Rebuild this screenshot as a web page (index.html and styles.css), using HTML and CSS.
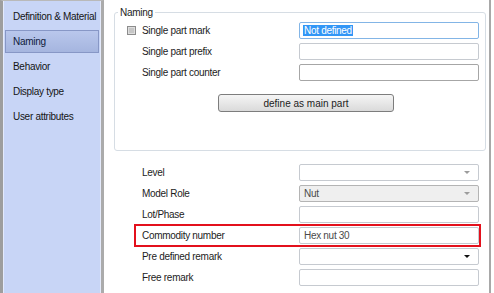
FILE: index.html
```html
<!DOCTYPE html>
<html lang="en">

<head>
  <meta charset="UTF-8">
  <meta name="viewport" content="width=device-width, initial-scale=1.0">
  <title>Part properties</title>
  <link rel="stylesheet" href="styles.css">
</head>

<body>
  <div class="dialog">
    <nav class="tabs">
      <a class="tab">Definition &amp; Material</a>
      <a class="tab active">Naming</a>
      <a class="tab">Behavior</a>
      <a class="tab">Display type</a>
      <a class="tab">User attributes</a>
    </nav>
    <main class="panel">
      <fieldset class="group">
        <legend>Naming</legend>
        <div class="rows">
          <div class="row">
            <span class="check"></span>
            <label>Single part mark</label>
            <div class="field focus"><span class="selected">Not defined</span></div>
          </div>
          <div class="row">
            <span></span>
            <label>Single part prefix</label>
            <div class="field"></div>
          </div>
          <div class="row">
            <span></span>
            <label>Single part counter</label>
            <div class="field dark"></div>
          </div>
        </div>
        <button class="btn">define as main part</button>
      </fieldset>
      <section class="props">
        <div class="prop">
          <label>Level</label>
          <div class="field"><span class="arrow"></span></div>
        </div>
        <div class="prop">
          <label>Model Role</label>
          <div class="field readonly"><span class="value">Nut</span><span class="arrow"></span></div>
        </div>
        <div class="prop">
          <label>Lot/Phase</label>
          <div class="field"></div>
        </div>
        <div class="prop highlight">
          <label>Commodity number</label>
          <div class="field"><span class="value">Hex nut 30</span></div>
        </div>
        <div class="prop">
          <label>Pre defined remark</label>
          <div class="field"><span class="arrow black"></span></div>
        </div>
        <div class="prop">
          <label>Free remark</label>
          <div class="field"></div>
        </div>
      </section>
    </main>
  </div>
</body>

</html>
```

FILE: styles.css
```css
html {
  box-sizing: border-box;
  font-family: "Liberation Sans", Arial, sans-serif;
  font-size: 10px;
  letter-spacing: -0.3px;
}

*,
*:after,
*:before {
  box-sizing: inherit;
}

body {
  margin: 0;
  background-color: #fff;
  color: #1c1c1c;
}

.dialog {
  display: flex;
  height: 293px;
  padding-right: 3px;
}

/* left tab list */
.tabs {
  flex: none;
  width: 104px;
  display: flex;
  flex-direction: column;
  gap: 2px;
  padding: 4px 2px 0;
  background-color: #c8d5f6;
  border-left: 3px solid #9e9e9e;
  border-right: 3px solid #ababab;
  border-top: 1px solid #b9b9b9;
  box-shadow: inset 1px 0 0 #e4eafb, inset -1px 0 0 #e4eafb;
}

.tab {
  display: flex;
  align-items: center;
  height: 23px;
  padding-left: 7px;
  border: 1px solid transparent;
  white-space: nowrap;
  color: #141414;
}

.tab.active {
  background: linear-gradient(#b9c7ec, #a5b5df);
  border-color: #8797c6;
  color: #0f1a3a;
}

/* right panel */
.panel {
  flex: 1;
  padding: 6px 3px 0 10px;
  border-right: 2px solid #a8a8a8;
}

.group {
  margin: 0;
  min-width: 0;
  padding: 2px 6px 38px 12px;
  border: 1px solid #d6dde4;
  border-radius: 3px;
}

.group legend {
  margin-left: -9px;
  padding: 0 2px;
  line-height: 13px;
}

.rows {
  display: flex;
  flex-direction: column;
  gap: 2px;
}

.row {
  display: grid;
  grid-template-columns: 15px 157px 180px;
  align-items: center;
  height: 19px;
}

.check {
  width: 9px;
  height: 9px;
  border: 1px solid #8c8c8c;
  background-color: #c6c6c6;
  box-shadow: inset 0 0 0 1px #dedede;
}

.field {
  display: flex;
  align-items: center;
  height: 17px;
  padding: 0 3px;
  border: 1px solid #c6cad0;
  border-radius: 2px;
  background-color: #fff;
  color: #4a4a4a;
}

.field.focus {
  border-color: #83b5e6;
}

.field.dark {
  border-color: #a6a6a6;
}

.field.readonly {
  background-color: #efefef;
  border-color: #b4b4b4;
}

.selected {
  padding: 0 1px;
  background-color: #3296f6;
  color: #fff;
}

.value {
  padding-left: 1px;
}

.arrow {
  margin-left: auto;
  margin-right: 5px;
  border-left: 3px solid transparent;
  border-right: 3px solid transparent;
  border-top: 3px solid #9c9c9c;
}

.arrow.black {
  border-top-color: #111;
}

.btn {
  display: block;
  width: 176px;
  height: 18px;
  margin: 12px 0 0 91px;
  padding: 0;
  border: 1px solid #7d7d7d;
  border-radius: 3px;
  background: linear-gradient(#f5f5f5, #dadada);
  font: inherit;
  color: #1c1c1c;
}

.props {
  display: flex;
  flex-direction: column;
  align-items: flex-start;
  gap: 2px;
  margin: 12px 0 0 22px;
}

.prop {
  display: grid;
  grid-template-columns: 157px 180px;
  align-items: center;
  height: 19px;
  padding-left: 6px;
}

.highlight {
  outline: 2px solid #e3101c;
}
```
